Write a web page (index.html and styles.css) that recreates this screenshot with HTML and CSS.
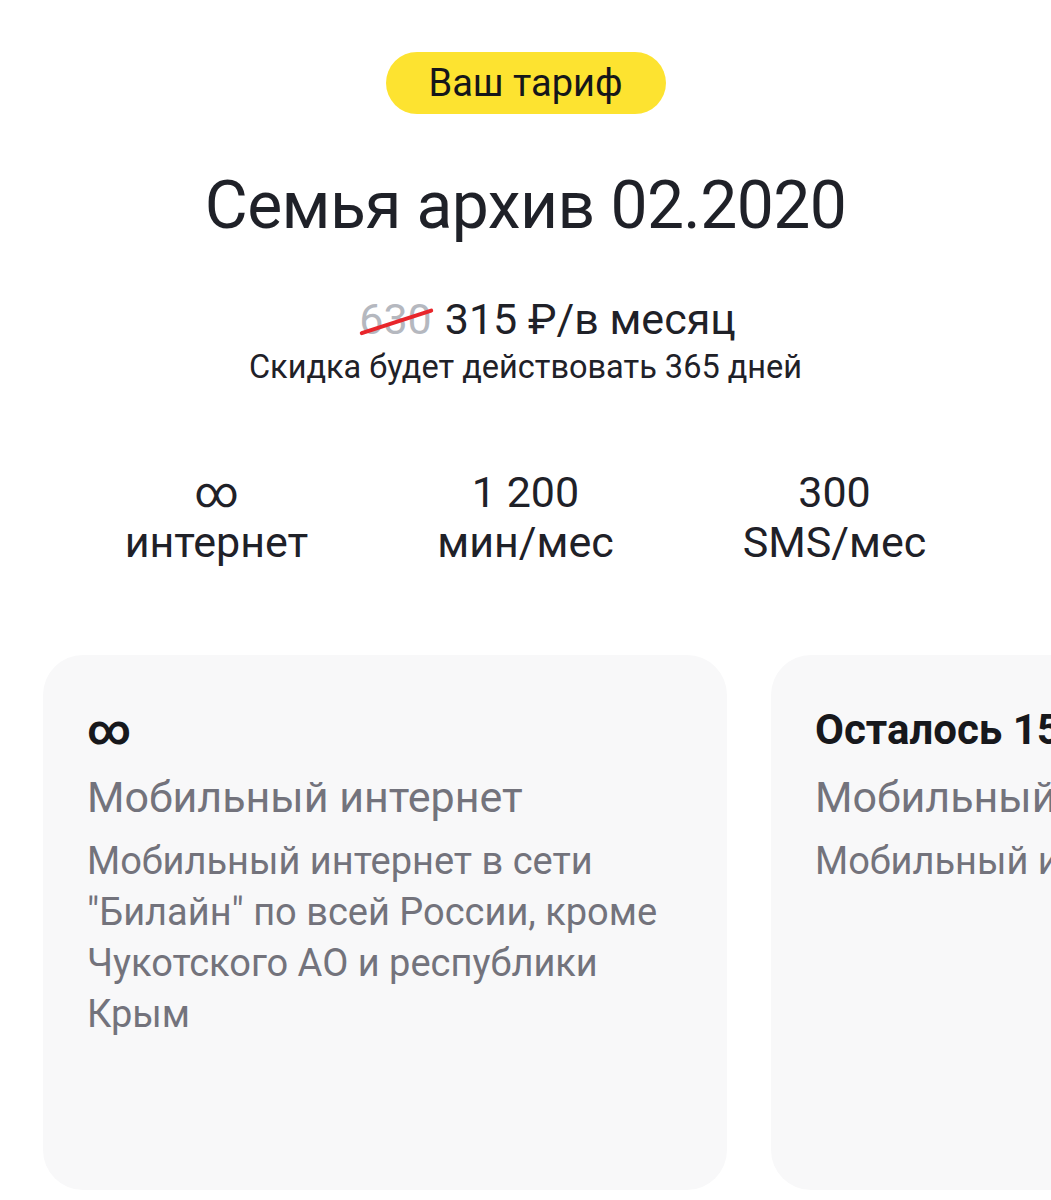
FILE: index.html
```html
<!DOCTYPE html>
<html lang="ru">
<head>
<meta charset="utf-8">
<title>Ваш тариф</title>
<link rel="stylesheet" href="styles.css">
</head>
<body>
<main class="page">
  <div class="badge-row"><span class="badge">Ваш тариф</span></div>
  <h1 class="title">Семья архив 02.2020</h1>
  <div class="price">
    <span class="old">630<span class="strike"></span></span>
    <span class="new">315 ₽/в месяц</span>
  </div>
  <div class="discount">Скидка будет действовать 365 дней</div>
  <div class="stats">
    <div class="stat"><div class="stat-val">∞</div><div class="stat-lbl">интернет</div></div>
    <div class="stat"><div class="stat-val">1 200</div><div class="stat-lbl">мин/мес</div></div>
    <div class="stat"><div class="stat-val">300</div><div class="stat-lbl">SMS/мес</div></div>
  </div>
  <div class="cards">
    <div class="card">
      <div class="card-head inf">∞</div>
      <div class="card-title">Мобильный интернет</div>
      <div class="card-text">Мобильный интернет в сети "Билайн" по всей России, кроме Чукотского АО и республики Крым</div>
    </div>
    <div class="card">
      <div class="card-head">Осталось 15 ГБ</div>
      <div class="card-title">Мобильный интернет</div>
      <div class="card-text">Мобильный интернет</div>
    </div>
  </div>
</main>
</body>
</html>
```

FILE: styles.css
```css
* { box-sizing: border-box; }
html, body { margin: 0; padding: 0; background: #ffffff; }
body {
  font-family: Roboto, "Noto Sans", "Liberation Sans", sans-serif;
  color: #1f2128;
  width: 1051px;
  overflow: hidden;
}
.page { padding-top: 52px; }
.badge-row { display: flex; justify-content: center; }
.badge {
  display: inline-flex;
  align-items: center;
  justify-content: center;
  width: 280px;
  height: 62px;
  border-radius: 31px;
  background: #fde330;
  font-size: 38px;
  color: #15161a;
}
.title {
  margin: 52px 0 0;
  text-align: center;
  font-weight: 400;
  font-size: 66px;
  line-height: 80px;
  letter-spacing: -0.6px;
}
.price {
  margin-top: 48px;
  padding-left: 44px;
  display: flex;
  justify-content: center;
  align-items: baseline;
  gap: 13px;
  font-size: 43px;
  line-height: 50px;
}
.old { position: relative; color: #b5b8bf; }
.strike {
  position: absolute;
  left: -1px;
  right: -3px;
  top: 52%;
  height: 4px;
  background: #e8262b;
  transform: rotate(-18deg);
  border-radius: 2px;
}
.discount {
  text-align: center;
  font-size: 32.5px;
  line-height: 40px;
  margin-top: 3px;
}
.stats {
  margin-top: 80px;
  display: grid;
  grid-template-columns: 309px 309px 309px;
  justify-content: center;
}
.stat { text-align: center; font-size: 43px; line-height: 50px; }
.cards {
  margin-top: 88px;
  display: flex;
  gap: 44px;
  padding-left: 43px;
}
.card {
  flex: 0 0 684px;
  height: 535px;
  border-radius: 40px;
  background: #f8f8f9;
  padding: 50px 44px 0;
}
.card-head {
  font-size: 42px;
  font-weight: 700;
  line-height: 50px;
  color: #17181c;
}
.card-head.inf { font-size: 42px; }
.card-title {
  margin-top: 17px;
  font-size: 43px;
  line-height: 50px;
  color: #73737c;
}
.card-text {
  margin-top: 14px;
  font-size: 38px;
  line-height: 51px;
  color: #73737c;
}
```
